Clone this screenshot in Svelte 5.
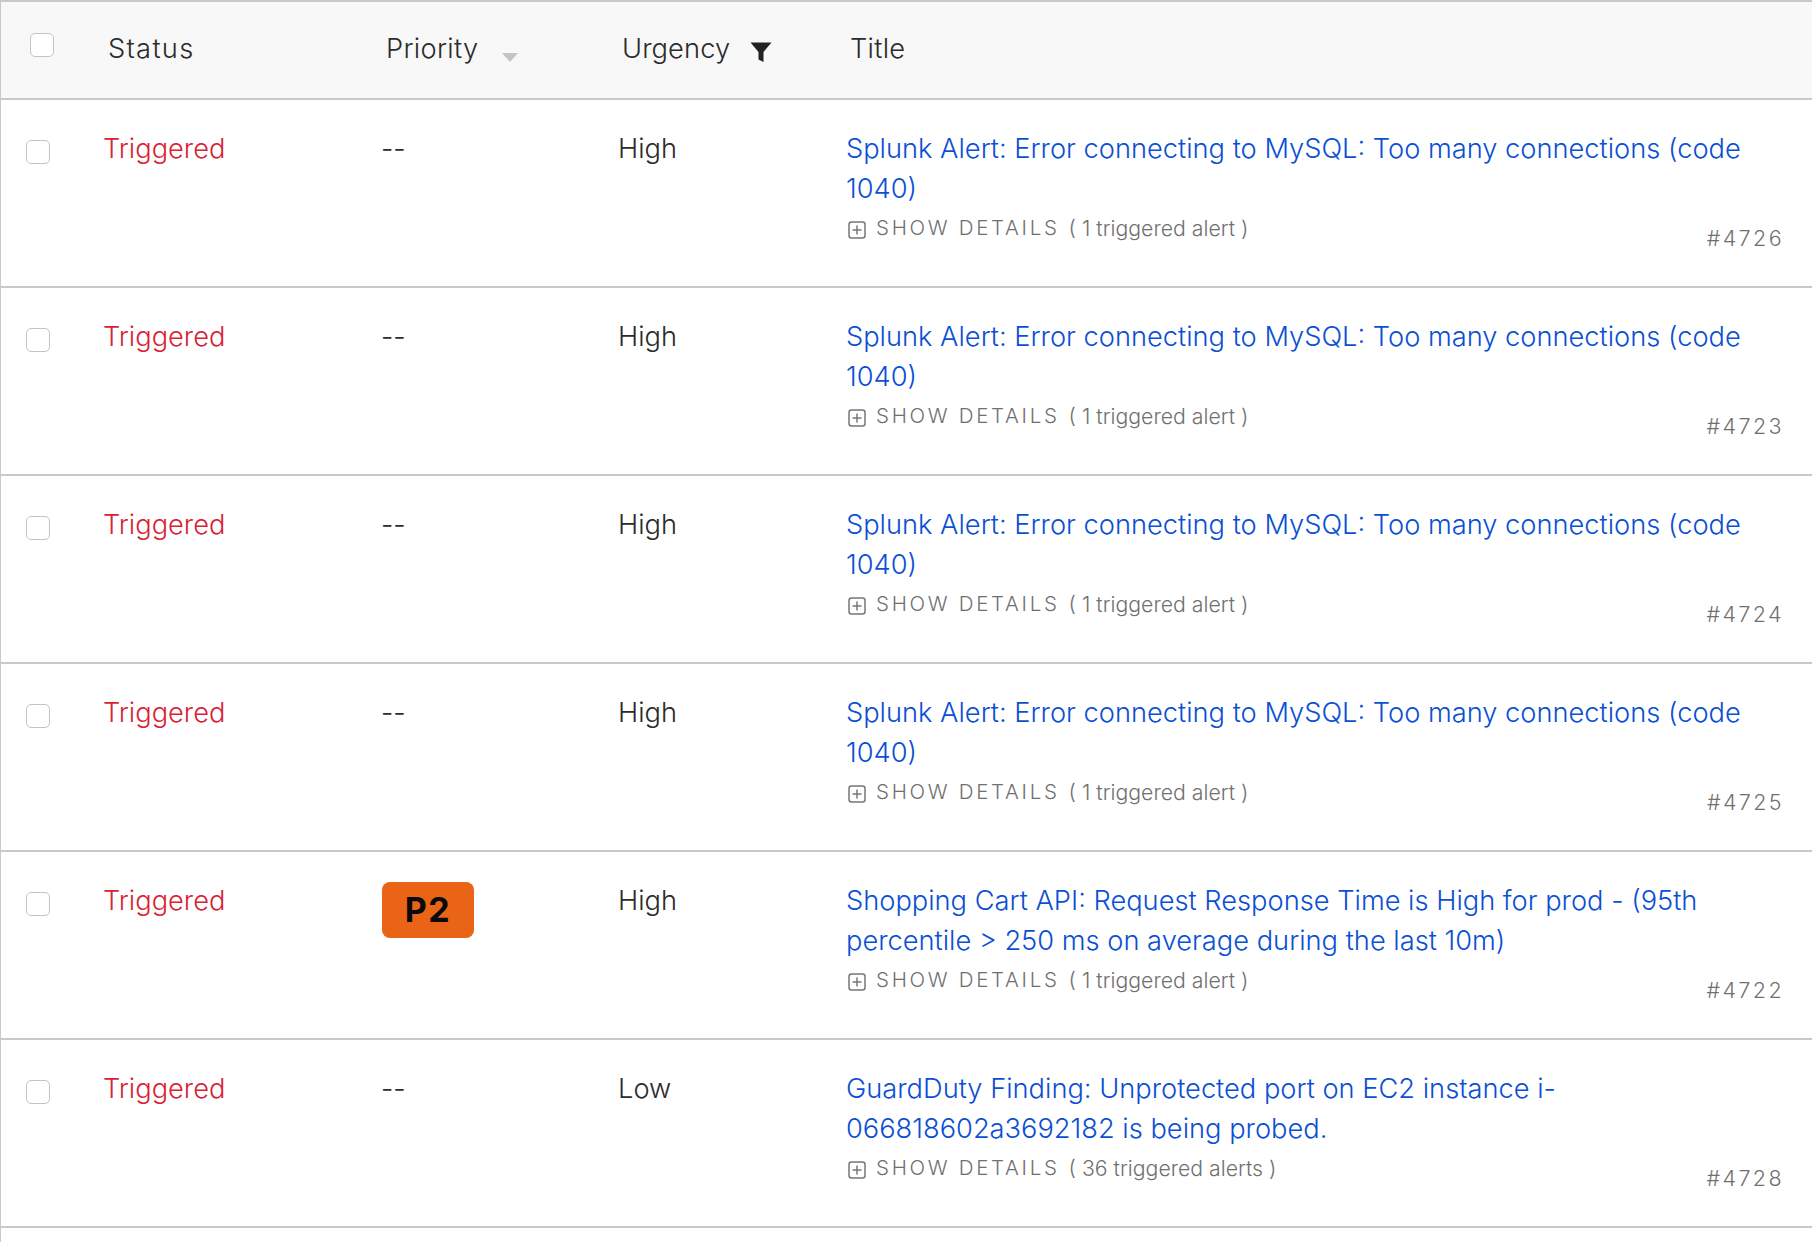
<script lang="ts">
  const splunk = "Splunk Alert: Error connecting to MySQL: Too many connections (code 1040)";
  const incidents = [
    { priority: "--", urgency: "High", title: splunk, alerts: "1 triggered alert", id: "#4726" },
    { priority: "--", urgency: "High", title: splunk, alerts: "1 triggered alert", id: "#4723" },
    { priority: "--", urgency: "High", title: splunk, alerts: "1 triggered alert", id: "#4724" },
    { priority: "--", urgency: "High", title: splunk, alerts: "1 triggered alert", id: "#4725" },
    {
      priority: "P2",
      urgency: "High",
      title: "Shopping Cart API: Request Response Time is High for prod - (95th percentile > 250 ms on average during the last 10m)",
      alerts: "1 triggered alert",
      id: "#4722",
    },
    {
      priority: "--",
      urgency: "Low",
      title: "GuardDuty Finding: Unprotected port on EC2 instance i-066818602a3692182 is being probed.",
      alerts: "36 triggered alerts",
      id: "#4728",
    },
  ];
</script>

<div class="table">
  <div class="head">
    <span class="check"></span>
    <span class="status-head">Status</span>
    <span class="sort">Priority<i class="arrow"></i></span>
    <span class="filter">
      Urgency
      <svg width="22" height="21" viewBox="0 0 22 21"><path d="M0.5 0.5h21l-8 9.5v10l-5-2.5v-7.5z" fill="#222" /></svg>
    </span>
    <span>Title</span>
  </div>

  {#each incidents as row}
    <div class="row">
      <span class="check"></span>
      <span class="status">Triggered</span>
      <span class="priority">
        {#if row.priority === "--"}
          <span class="empty">--</span>
        {:else}
          <b class="badge">{row.priority}</b>
        {/if}
      </span>
      <span>{row.urgency}</span>
      <div class="title-cell">
        <a href="#top">{row.title}</a>
        <div class="meta">
          <div class="details">
            <svg width="18" height="18" viewBox="0 0 18 18" fill="none" stroke="#777" stroke-width="1.5">
              <rect x="1" y="1" width="16" height="16" rx="2.5" />
              <path d="M9 4.5v9M4.5 9h9" />
            </svg>
            <span class="show">SHOW DETAILS</span>
            <span class="count">( {row.alerts} )</span>
          </div>
          <span class="id">{row.id}</span>
        </div>
      </div>
    </div>
  {/each}
</div>

<style>
  :global(body) {
    background: #fff;
  }

  .table {
    width: 1812px;
    min-height: 1242px;
    box-sizing: border-box;
    border-top: 2px solid #c9c9c9;
    border-left: 1px solid #c9c9c9;
    font-family: Inter, "Noto Sans", sans-serif;
    font-size: 27.25px;
    font-weight: 350;
    color: #2b2b2b;
  }

  .head,
  .row {
    display: grid;
    border-bottom: 2px solid #c9c9c9;
    box-sizing: border-box;
  }

  .head {
    grid-template-columns: 107px 278px 236px 228px 1fr;
    height: 98px;
    align-items: center;
    background: #f8f8f8;
    padding-bottom: 3px;
    letter-spacing: 0.3px;
  }

  .status-head {
    letter-spacing: 1.3px;
  }

  .row {
    grid-template-columns: 102px 279px 236px 228px 1fr;
    height: 188px;
    padding-top: 29px;
    line-height: 40px;
  }

  .check {
    display: block;
    width: 24px;
    height: 24px;
    box-sizing: border-box;
    border: 1.5px solid #c4c4c4;
    border-radius: 5px;
    background: #fff;
    margin-left: 25px;
    margin-top: 11px;
  }

  .head .check {
    margin-left: 29px;
    margin-top: -8px;
  }

  .sort {
    display: flex;
    align-items: center;
  }

  .arrow {
    width: 0;
    height: 0;
    border-left: 8px solid transparent;
    border-right: 8px solid transparent;
    border-top: 9px solid #c4c4c4;
    margin: 17px 0 0 24px;
  }

  .filter {
    display: flex;
    align-items: center;
    gap: 20px;
    letter-spacing: 0.1px;
  }

  .filter svg {
    margin-top: 7px;
  }

  .status {
    color: #d81f36;
  }

  .priority {
    display: block;
  }

  .empty {
    margin-left: -1px;
  }

  .badge {
    display: inline-block;
    width: 92px;
    height: 56px;
    line-height: 56px;
    margin-top: 1px;
    text-align: center;
    border-radius: 8px;
    background: #ea6417;
    color: #0a0a0a;
    font-size: 34px;
    font-weight: 700;
    letter-spacing: 1.5px;
  }

  .title-cell {
    padding-right: 28px;
  }

  a {
    display: block;
    color: #0b4fd4;
    text-decoration: none;
    padding-right: 32px;
  }

  .meta {
    display: flex;
    justify-content: space-between;
    color: #707070;
    line-height: 28px;
    margin-top: 5px;
  }

  .details {
    display: flex;
    align-items: center;
    height: 28px;
    font-size: 21.25px;
  }

  .details svg {
    margin: 3px 10px 0 2px;
  }

  .show {
    letter-spacing: 2.7px;
    font-size: 20.5px;
    margin-right: 9px;
  }

  .id {
    font-size: 21.5px;
    letter-spacing: 2.4px;
    margin-top: 10px;
  }
</style>
